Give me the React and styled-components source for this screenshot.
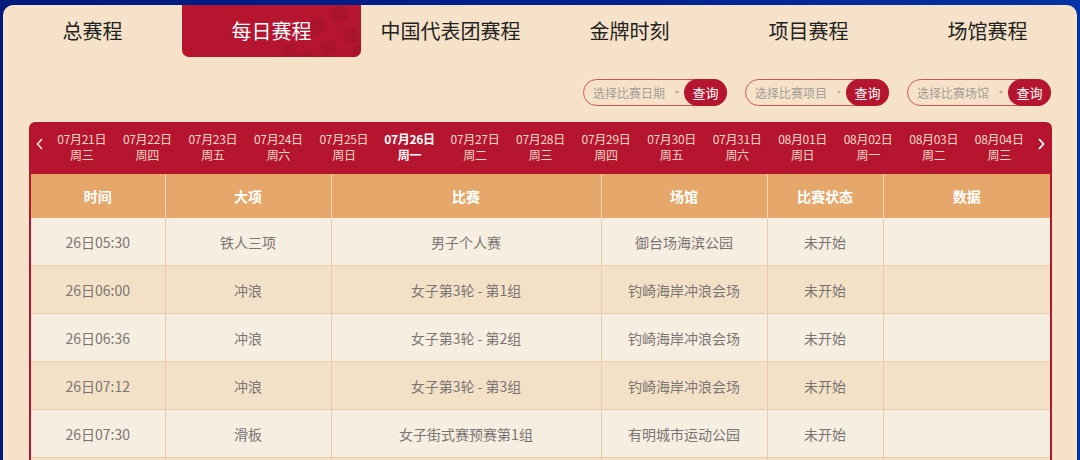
import React from "react";
import styled, { createGlobalStyle } from "styled-components";

const TABS = ["总赛程", "每日赛程", "中国代表团赛程", "金牌时刻", "项目赛程", "场馆赛程"];

const FILTERS = ["选择比赛日期", "选择比赛项目", "选择比赛场馆"];

const DAYS = [
  ["07月21日", "周三"],
  ["07月22日", "周四"],
  ["07月23日", "周五"],
  ["07月24日", "周六"],
  ["07月25日", "周日"],
  ["07月26日", "周一"],
  ["07月27日", "周二"],
  ["07月28日", "周三"],
  ["07月29日", "周四"],
  ["07月30日", "周五"],
  ["07月31日", "周六"],
  ["08月01日", "周日"],
  ["08月02日", "周一"],
  ["08月03日", "周二"],
  ["08月04日", "周三"],
];

const COLUMNS = [
  { title: "时间", width: 134 },
  { title: "大项", width: 166 },
  { title: "比赛", width: 270 },
  { title: "场馆", width: 166 },
  { title: "比赛状态", width: 116 },
  { title: "数据", width: 167 },
];

const ROWS = [
  ["26日05:30", "铁人三项", "男子个人赛", "御台场海滨公园", "未开始", ""],
  ["26日06:00", "冲浪", "女子第3轮 - 第1组", "钓崎海岸冲浪会场", "未开始", ""],
  ["26日06:36", "冲浪", "女子第3轮 - 第2组", "钓崎海岸冲浪会场", "未开始", ""],
  ["26日07:12", "冲浪", "女子第3轮 - 第3组", "钓崎海岸冲浪会场", "未开始", ""],
  ["26日07:30", "滑板", "女子街式赛预赛第1组", "有明城市运动公园", "未开始", ""],
];

export default function App() {
  return (
    <>
      <GlobalStyle />
      <Card>
        <Tabs>
          {TABS.map((t, i) => (
            <Tab key={t} $active={i === 1}>
              {i === 1 && <Checker />}
              <span>{t}</span>
            </Tab>
          ))}
        </Tabs>
        <Filters>
          {FILTERS.map((f) => (
            <Pill key={f}>
              <Placeholder>{f}</Placeholder>
              <Caret />
              <QueryButton>查询</QueryButton>
            </Pill>
          ))}
        </Filters>
        <Schedule>
          <DateBar>
            <Arrow>
              <svg width="8" height="12" viewBox="0 0 8 12">
                <path d="M6 1L1.5 6L6 11" stroke="#f5d9c0" strokeWidth="1.8" fill="none" />
              </svg>
            </Arrow>
            <Days>
              {DAYS.map(([d, w], i) => (
                <Day key={d} $active={i === 5}>
                  <span>{d}</span>
                  <span>{w}</span>
                </Day>
              ))}
            </Days>
            <Arrow>
              <svg width="8" height="12" viewBox="0 0 8 12">
                <path d="M2 1L6.5 6L2 11" stroke="#ffffff" strokeWidth="1.8" fill="none" />
              </svg>
            </Arrow>
          </DateBar>
          <Table>
            <colgroup>
              {COLUMNS.map((c) => (
                <col key={c.title} style={{ width: c.width }} />
              ))}
            </colgroup>
            <thead>
              <tr>
                {COLUMNS.map((c) => (
                  <Th key={c.title}>{c.title}</Th>
                ))}
              </tr>
            </thead>
            <tbody>
              {ROWS.map((r, i) => (
                <Row key={i} $alt={i % 2 === 1}>
                  {r.map((cell, j) => (
                    <Td key={j}>{cell}</Td>
                  ))}
                </Row>
              ))}
              <Row $alt>
                {COLUMNS.map((c) => (
                  <Td key={c.title} />
                ))}
              </Row>
            </tbody>
          </Table>
        </Schedule>
      </Card>
    </>
  );
}

function Checker() {
  // faint diamond squares on the active tab
  const squares = [
    [150, 2], [128, 14], [162, 24], [140, 36], [118, 46], [170, 40], [100, 40],
  ];
  return (
    <CheckerSvg width="179" height="52" viewBox="0 0 179 52">
      {squares.map(([x, y], i) => (
        <rect
          key={i}
          x={x}
          y={y}
          width="14"
          height="14"
          fill="#9e1229"
          opacity="0.55"
          transform={`rotate(-20 ${x + 7} ${y + 7})`}
        />
      ))}
    </CheckerSvg>
  );
}

const GlobalStyle = createGlobalStyle`
  html, body {
    margin: 0;
    padding: 0;
    width: 1080px;
    height: 460px;
    overflow: hidden;
    background: linear-gradient(90deg, #001a7e 0%, #011f8c 50%, #0333a6 100%);
    font-family: "Noto Sans", "Noto Sans CJK SC", sans-serif;
  }
`;

const Card = styled.div`
  margin: 5px 3px 0 3px;
  height: 455px;
  background: #f5e2c9;
  border-radius: 10px 10px 0 0;
  overflow: hidden;
  display: flex;
  flex-direction: column;
`;

const Tabs = styled.div`
  display: grid;
  grid-template-columns: repeat(6, 1fr);
  height: 52px;
  flex-shrink: 0;
`;

const Tab = styled.div`
  position: relative;
  display: flex;
  align-items: center;
  justify-content: center;
  font-size: 20px;
  color: ${(p) => (p.$active ? "#ffffff" : "#222222")};
  background: ${(p) => (p.$active ? "#b5152f" : "transparent")};
  border-radius: 0 0 7px 7px;
  overflow: hidden;
  font-family: "Noto Sans CJK SC", sans-serif;
  span {
    position: relative;
    top: -1px;
  }
`;

const CheckerSvg = styled.svg`
  position: absolute;
  left: 0;
  top: 0;
`;

const Filters = styled.div`
  display: flex;
  justify-content: flex-end;
  gap: 18px;
  padding: 22px 26px 0 0;
  height: 27px;
  flex-shrink: 0;
`;

const Pill = styled.div`
  display: flex;
  align-items: center;
  width: 144px;
  height: 27px;
  box-sizing: border-box;
  border: 1px solid #d0545f;
  border-radius: 14px;
  padding-left: 9px;
`;

const Placeholder = styled.span`
  font-size: 12px;
  color: #a59d96;
  font-family: "Noto Sans CJK SC", sans-serif;
  white-space: nowrap;
`;

const Caret = styled.span`
  width: 0;
  height: 0;
  margin-left: 10px;
  border-left: 2.5px solid transparent;
  border-right: 2.5px solid transparent;
  border-top: 3px solid #b3aaa3;
`;

const QueryButton = styled.button`
  margin-left: auto;
  margin-right: -1px;
  height: 27px;
  width: 43px;
  border: none;
  border-radius: 14px;
  background: #b5152f;
  color: #ffffff;
  font-size: 13px;
  padding: 0;
  font-family: "Noto Sans CJK SC", sans-serif;
`;

const Schedule = styled.div`
  margin: 16px 25px 0 26px;
  display: flex;
  flex-direction: column;
  flex: 1;
  background: #b5152f;
  border-radius: 6px 6px 0 0;
  padding: 0 2px;
`;

const DateBar = styled.div`
  display: flex;
  align-items: center;
  height: 52px;
  flex-shrink: 0;
`;

const Arrow = styled.div`
  width: 18px;
  display: flex;
  justify-content: center;
  align-items: center;
  padding-bottom: 8px;
`;

const Days = styled.div`
  flex: 1;
  display: grid;
  grid-template-columns: repeat(15, 1fr);
  padding-bottom: 2px;
`;

const Day = styled.div`
  display: flex;
  flex-direction: column;
  align-items: center;
  font-size: 12px;
  line-height: 16px;
  color: ${(p) => (p.$active ? "#ffffff" : "#f5d9c6")};
  font-weight: ${(p) => (p.$active ? 700 : 400)};
  font-family: "Noto Sans CJK SC", sans-serif;
  letter-spacing: -0.3px;
`;

const Table = styled.table`
  width: 1019px;
  border-collapse: collapse;
  table-layout: fixed;
  font-family: "Noto Sans CJK SC", sans-serif;
`;

const Th = styled.th`
  height: 44px;
  background: #e5a76a;
  color: #ffffff;
  font-size: 14px;
  font-weight: 700;
  border-left: 1px solid #f5d8b9;
  padding: 0;
  &:first-child {
    border-left: none;
  }
`;

const Row = styled.tr`
  background: ${(p) => (p.$alt ? "#f3e1c7" : "#f7eee2")};
`;

const Td = styled.td`
  height: 47px;
  padding: 0;
  text-align: center;
  font-size: 14px;
  color: #7a7572;
  border-left: 1px solid #ebcca9;
  border-bottom: 1px solid #ebcca9;
  &:first-child {
    border-left: none;
  }
`;
